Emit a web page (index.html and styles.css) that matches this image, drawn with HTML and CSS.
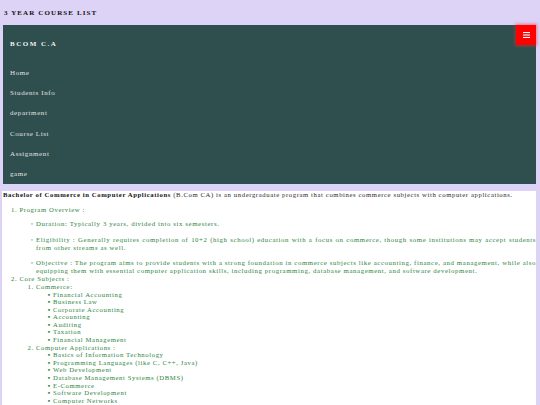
FILE: index.html
```html
<!DOCTYPE html>
<html lang="en">
<head>
<meta charset="utf-8">
<title>3 Year Course List</title>
<link rel="stylesheet" href="styles.css">
</head>
<body>
<div class="page">
  <header class="top">3 YEAR COURSE LIST</header>
  <nav class="nav">
    <div class="brand">BCOM C.A</div>
    <button class="menu" type="button" aria-label="menu">
      <svg width="7" height="6" viewBox="0 0 7 6"><rect x="0" y="0" width="7" height="1.1" fill="#fff"/><rect x="0" y="2.45" width="7" height="1.1" fill="#fff"/><rect x="0" y="4.9" width="7" height="1.1" fill="#fff"/></svg>
    </button>
    <ul class="links">
      <li>Home</li>
      <li>Students Info</li>
      <li>department</li>
      <li>Course List</li>
      <li>Assignment</li>
      <li>game</li>
    </ul>
  </nav>
  <main class="content">
    <p class="intro"><b>Bachelor of Commerce in Computer Applications</b> (B.Com CA) is an undergraduate program that combines commerce subjects with computer applications.</p>
    <ol class="outline">
      <li>Program Overview :
        <ul class="overview">
          <li>Duration: Typically 3 years, divided into six semesters.</li>
          <li>Eligibility : Generally requires completion of 10+2 (high school) education with a focus on commerce, though some institutions may accept students from other streams as well.</li>
          <li>Objective : The program aims to provide students with a strong foundation in commerce subjects like accounting, finance, and management, while also equipping them with essential computer application skills, including programming, database management, and software development.</li>
        </ul>
      </li>
      <li>Core Subjects :
        <ol class="sub">
          <li>Commerce:
            <ul class="items">
              <li>Financial Accounting</li>
              <li>Business Law</li>
              <li>Corporate Accounting</li>
              <li>Accounting</li>
              <li>Auditing</li>
              <li>Taxation</li>
              <li>Financial Management</li>
            </ul>
          </li>
          <li>Computer Applications :
            <ul class="items">
              <li>Basics of Information Technology</li>
              <li>Programming Languages (like C, C++, Java)</li>
              <li>Web Development</li>
              <li>Database Management Systems (DBMS)</li>
              <li>E-Commerce</li>
              <li>Software Development</li>
              <li>Computer Networks</li>
            </ul>
          </li>
          <li>Skill Development :
            <ul class="items">
              <li>Communication Skills</li>
              <li>Business Ethics</li>
            </ul>
          </li>
        </ol>
      </li>
    </ol>
  </main>
</div>
</body>
</html>
```
FILE: styles.css
```css
html, body {
  margin: 0;
  padding: 0;
}
body {
  background: #dcd3f6;
  font-family: "Liberation Serif", "Times New Roman", serif;
}
.page {
  margin: 0 4px 0 3px;
}
.top {
  height: 25px;
  display: flex;
  align-items: center;
  padding-left: 1px;
  font-weight: bold;
  font-size: 7px;
  letter-spacing: 1.1px;
  color: #111;
}
.nav {
  position: relative;
  background: #2f4f4f;
  padding: 0 0 0 7px;
}
.brand {
  padding-top: 15px;
  height: 23px;
  line-height: 8px;
  font-size: 7px;
  font-weight: bold;
  letter-spacing: 1.5px;
  color: #f2f2f2;
}
.menu {
  position: absolute;
  top: 0;
  right: 0;
  width: 20px;
  height: 20px;
  padding: 0;
  border: 0;
  background: #ff0000;
  box-shadow: 0 0 3px 1px rgba(255, 40, 40, 0.55);
  display: flex;
  align-items: center;
  justify-content: center;
}
.links {
  list-style: none;
  margin: 0;
  padding: 0;
}
.links li {
  height: 20.2px;
  line-height: 20.2px;
  font-size: 7px;
  letter-spacing: 0.6px;
  color: #e2e2e2;
}
.content {
  background: #fff;
  margin-left: -1px;
  padding: 0 0 20px 1px;
  font-size: 6.7px;
  line-height: 7.6px;
  letter-spacing: 0.6px;
}
.intro {
  margin: 7px 0 7px 0;
  color: #2a2a2a;
}
.intro b {
  color: #111;
}
.outline {
  margin: 0;
  padding-left: 16.5px;
  color: #2e8540;
}
.overview {
  margin: -0.5px 0 0 0;
  padding-left: 16.5px;
  text-align: justify;
  font-size: 6.8px;
  line-height: 8px;
  list-style-type: "\25E6  ";
}
.overview li {
  margin-top: 7.5px;
}
.sub {
  margin: 0;
  padding-left: 16.5px;
}
.items {
  margin: 0;
  padding-left: 17px;
  list-style-type: "\25AA  ";
}
```
